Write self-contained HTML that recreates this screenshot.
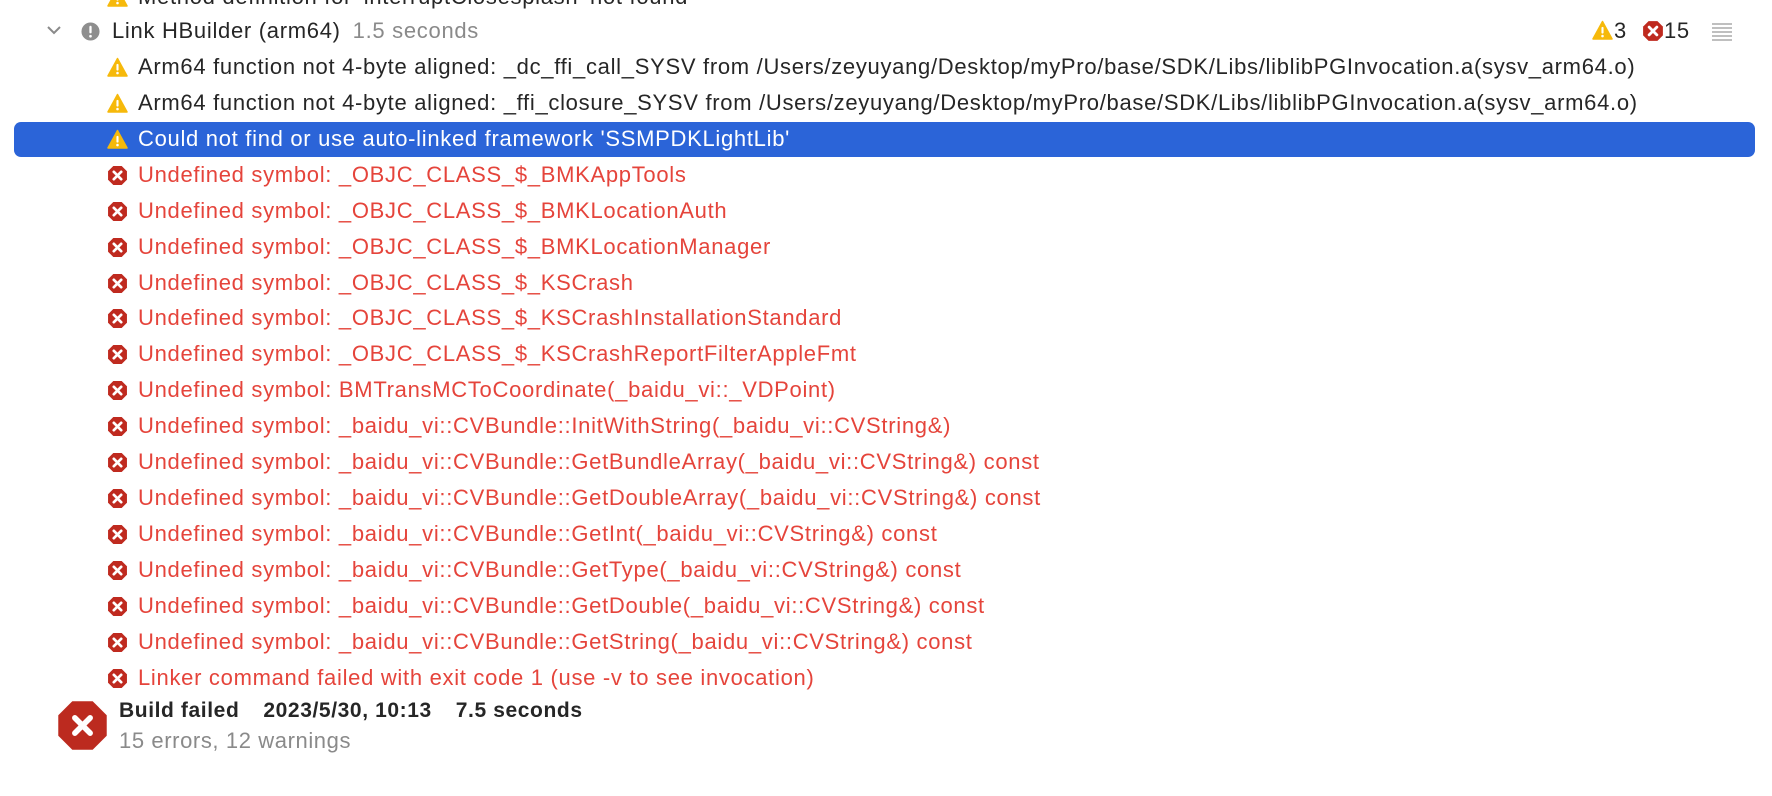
<!DOCTYPE html>
<html><head><meta charset="utf-8"><style>
body{margin:0;width:1772px;height:796px;background:#fff;overflow:hidden;position:relative;font-family:"Liberation Sans",sans-serif}
.r{position:absolute;left:0;height:36px;line-height:36px;font-size:22px;letter-spacing:0.7px;color:#262626;white-space:nowrap}
.r .t{position:absolute;left:138px;top:0}
.ic{position:absolute;left:107px;top:8px;width:21px;height:21px}
.red{color:#e5443b}
.hl{position:absolute;left:14px;top:122px;width:1741px;height:35px;background:#2b64d8;border-radius:7px}
</style></head><body>
<svg width="0" height="0" style="position:absolute"><defs>
<symbol id="w" viewBox="0 0 20 20"><path d="M10 1.5 L19 18 L1 18 Z" fill="#f6b90b" stroke="#f6b90b" stroke-width="1.5" stroke-linejoin="round"/><rect x="9" y="6.5" width="2" height="6.5" rx="1" fill="#fff"/><circle cx="10" cy="15.3" r="1.2" fill="#fff"/></symbol>
<symbol id="e" viewBox="0 0 20 20"><path d="M6 1 H14 L19 6 V14 L14 19 H6 L1 14 V6 Z" fill="#bf2a1f"/><path d="M6.5 6.5 L13.5 13.5 M13.5 6.5 L6.5 13.5" stroke="#fff" stroke-width="2.6" stroke-linecap="round"/></symbol>
</defs></svg>

<div class="r" style="top:-21px"><svg class="ic" style="top:8px"><use href="#w"/></svg><span class="t">Method definition for 'interruptClosesplash' not found</span></div>

<div class="r" style="top:13px">
<svg style="position:absolute;left:47px;top:12px" width="14" height="10" viewBox="0 0 14 10"><path d="M1 2 L7 8 L13 2" fill="none" stroke="#8a8a8a" stroke-width="2"/></svg>
<svg style="position:absolute;left:81px;top:9px" width="19" height="19" viewBox="0 0 20 20"><circle cx="10" cy="10" r="9.5" fill="#8e8e8e"/><rect x="8.8" y="4" width="2.4" height="8" rx="1.2" fill="#fff"/><circle cx="10" cy="15" r="1.4" fill="#fff"/></svg>
<span style="position:absolute;left:112px">Link HBuilder (arm64)<span style="color:#8a8a8a;margin-left:12px">1.5 seconds</span></span>
<svg style="position:absolute;left:1592px;top:7px" width="21" height="21"><use href="#w"/></svg><span style="position:absolute;left:1614px">3</span>
<svg style="position:absolute;left:1642px;top:7px" width="22" height="22"><use href="#e"/></svg><span style="position:absolute;left:1664px">15</span>
<svg style="position:absolute;left:1712px;top:10px" width="20" height="18"><g stroke="#999" stroke-width="1.3"><line x1="0" y1="1" x2="20" y2="1"/><line x1="0" y1="5" x2="20" y2="5"/><line x1="0" y1="9" x2="20" y2="9"/><line x1="0" y1="13" x2="20" y2="13"/><line x1="0" y1="17" x2="20" y2="17"/></g></svg>
</div>

<div class="r" style="top:49px"><svg class="ic"><use href="#w"/></svg><span class="t">Arm64 function not 4-byte aligned: _dc_ffi_call_SYSV from /Users/zeyuyang/Desktop/myPro/base/SDK/Libs/liblibPGInvocation.a(sysv_arm64.o)</span></div>
<div class="r" style="top:85px"><svg class="ic"><use href="#w"/></svg><span class="t">Arm64 function not 4-byte aligned: _ffi_closure_SYSV from /Users/zeyuyang/Desktop/myPro/base/SDK/Libs/liblibPGInvocation.a(sysv_arm64.o)</span></div>
<div class="hl"></div>
<div class="r" style="top:121px;color:#fff"><svg class="ic"><use href="#w"/></svg><span class="t">Could not find or use auto-linked framework 'SSMPDKLightLib'</span></div>

<div class="r red" style="top:157px"><svg class="ic"><use href="#e"/></svg><span class="t">Undefined symbol: _OBJC_CLASS_$_BMKAppTools</span></div>
<div class="r red" style="top:193px"><svg class="ic"><use href="#e"/></svg><span class="t">Undefined symbol: _OBJC_CLASS_$_BMKLocationAuth</span></div>
<div class="r red" style="top:229px"><svg class="ic"><use href="#e"/></svg><span class="t">Undefined symbol: _OBJC_CLASS_$_BMKLocationManager</span></div>
<div class="r red" style="top:265px"><svg class="ic"><use href="#e"/></svg><span class="t">Undefined symbol: _OBJC_CLASS_$_KSCrash</span></div>
<div class="r red" style="top:300px"><svg class="ic"><use href="#e"/></svg><span class="t">Undefined symbol: _OBJC_CLASS_$_KSCrashInstallationStandard</span></div>
<div class="r red" style="top:336px"><svg class="ic"><use href="#e"/></svg><span class="t">Undefined symbol: _OBJC_CLASS_$_KSCrashReportFilterAppleFmt</span></div>
<div class="r red" style="top:372px"><svg class="ic"><use href="#e"/></svg><span class="t">Undefined symbol: BMTransMCToCoordinate(_baidu_vi::_VDPoint)</span></div>
<div class="r red" style="top:408px"><svg class="ic"><use href="#e"/></svg><span class="t">Undefined symbol: _baidu_vi::CVBundle::InitWithString(_baidu_vi::CVString&amp;)</span></div>
<div class="r red" style="top:444px"><svg class="ic"><use href="#e"/></svg><span class="t">Undefined symbol: _baidu_vi::CVBundle::GetBundleArray(_baidu_vi::CVString&amp;) const</span></div>
<div class="r red" style="top:480px"><svg class="ic"><use href="#e"/></svg><span class="t">Undefined symbol: _baidu_vi::CVBundle::GetDoubleArray(_baidu_vi::CVString&amp;) const</span></div>
<div class="r red" style="top:516px"><svg class="ic"><use href="#e"/></svg><span class="t">Undefined symbol: _baidu_vi::CVBundle::GetInt(_baidu_vi::CVString&amp;) const</span></div>
<div class="r red" style="top:552px"><svg class="ic"><use href="#e"/></svg><span class="t">Undefined symbol: _baidu_vi::CVBundle::GetType(_baidu_vi::CVString&amp;) const</span></div>
<div class="r red" style="top:588px"><svg class="ic"><use href="#e"/></svg><span class="t">Undefined symbol: _baidu_vi::CVBundle::GetDouble(_baidu_vi::CVString&amp;) const</span></div>
<div class="r red" style="top:624px"><svg class="ic"><use href="#e"/></svg><span class="t">Undefined symbol: _baidu_vi::CVBundle::GetString(_baidu_vi::CVString&amp;) const</span></div>
<div class="r red" style="top:660px"><svg class="ic"><use href="#e"/></svg><span class="t">Linker command failed with exit code 1 (use -v to see invocation)</span></div>

<svg style="position:absolute;left:57px;top:700px" width="51" height="51" viewBox="0 0 20 20"><path d="M6 0.5 H14 L19.5 6 V14 L14 19.5 H6 L0.5 14 V6 Z" fill="#bc2a1f"/><path d="M7 7 L13 13 M13 7 L7 13" stroke="#fff" stroke-width="2.2" stroke-linecap="round"/></svg>
<div style="position:absolute;left:119px;top:699px;font-size:21px;letter-spacing:0.6px;font-weight:bold;color:#262626;white-space:nowrap">Build failed<span style="margin-left:24px">2023/5/30, 10:13</span><span style="margin-left:24px">7.5 seconds</span></div>
<div style="position:absolute;left:119px;top:728px;font-size:22px;letter-spacing:0.6px;color:#8a8a8a;white-space:nowrap">15 errors, 12 warnings</div>
</body></html>
